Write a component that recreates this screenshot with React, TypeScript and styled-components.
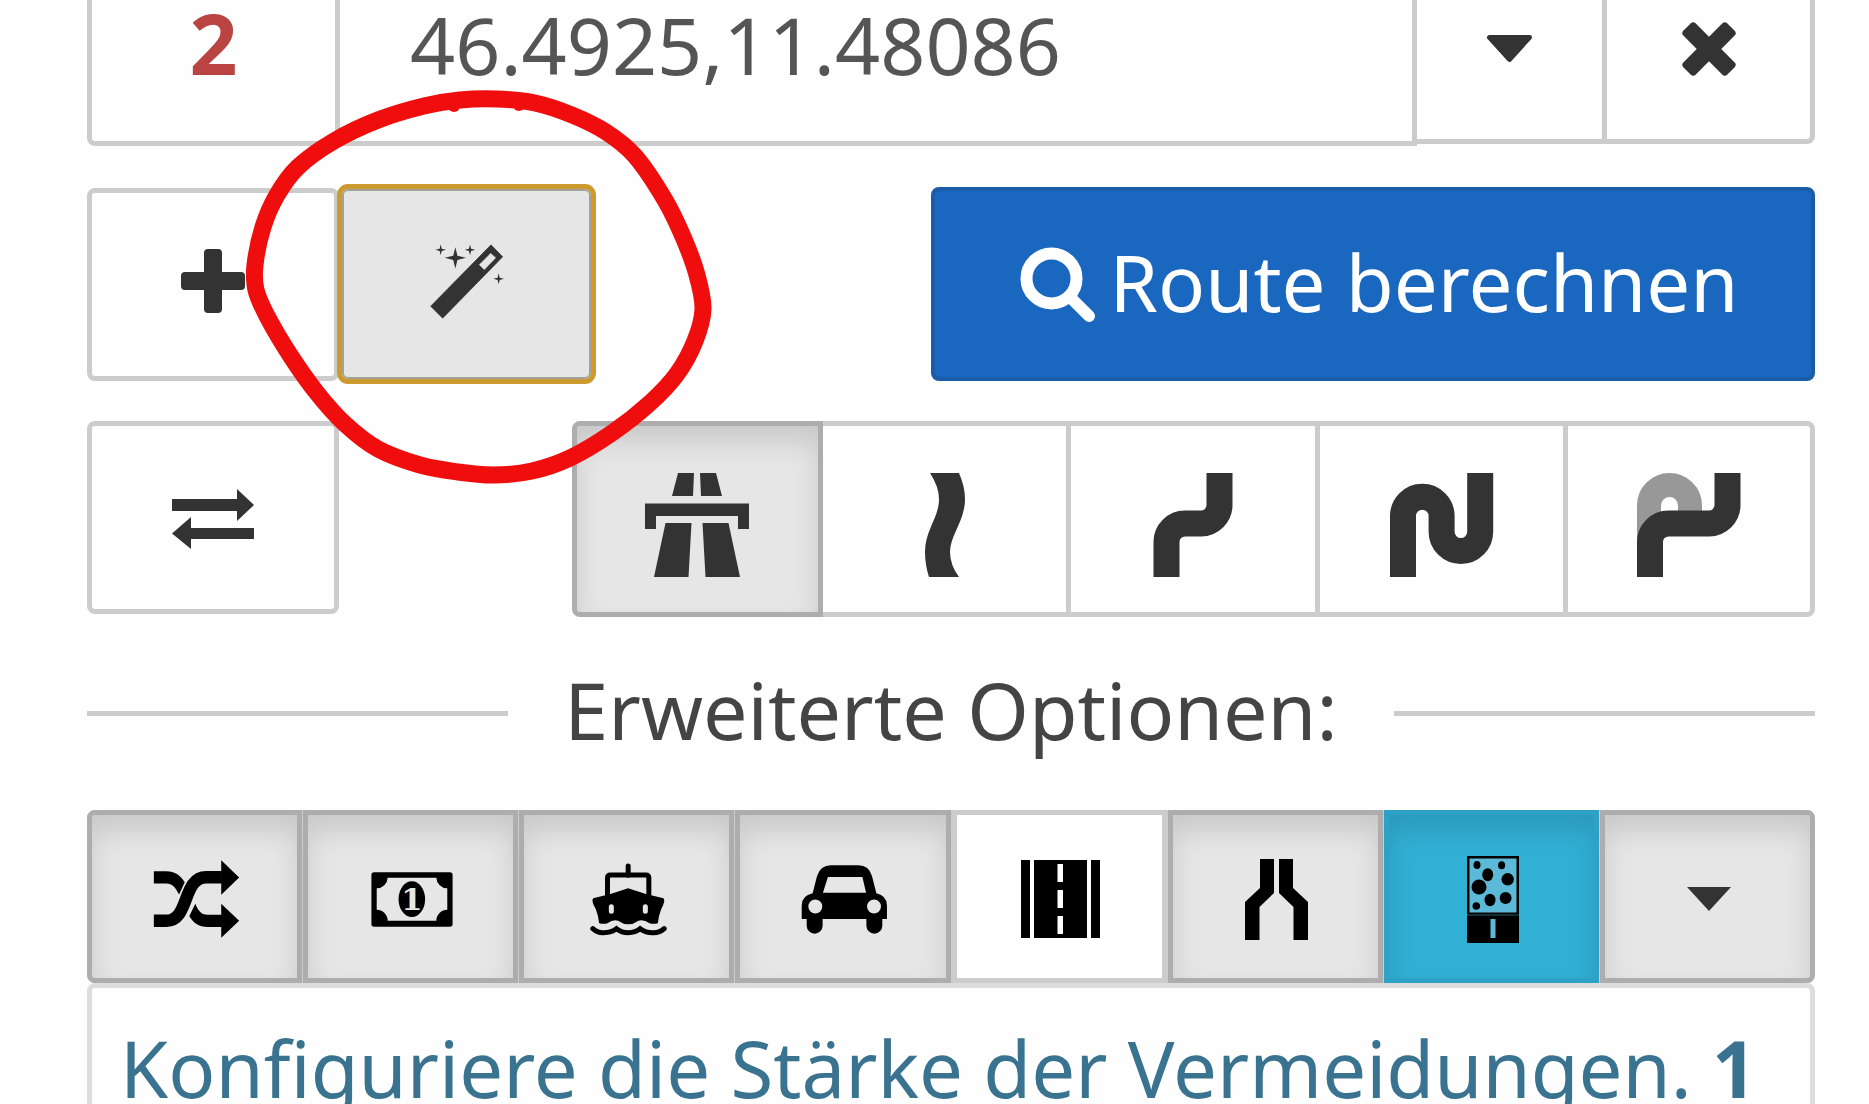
import React from "react";
import styled, { createGlobalStyle, css } from "styled-components";

const ink = "#333333";
const line = "#cccccc";
const pressedLine = "#adadad";

const GlobalStyle = createGlobalStyle`
  *, *::before, *::after { box-sizing: border-box; }
  body {
    margin: 0;
    background: #fefefe;
    font-family: "Noto Sans", "Open Sans", sans-serif;
    font-size: 78px;
  }
  button, input { font: inherit; margin: 0; }
`;

const Page = styled.main`
  display: flex;
  flex-direction: column;
  height: 100vh;
  overflow: hidden;
  padding: 0 54px 0 87px;
`;

/* ---- waypoint row ---- */

const Waypoint = styled.div`
  display: grid;
  grid-template-columns: 248px minmax(0, 1fr) 190px 208px;
  align-items: start;
  flex: none;
`;

const WaypointNumber = styled.label`
  height: 146px;
  padding-bottom: 56px;
  display: flex;
  align-items: center;
  justify-content: center;
  border: solid ${line};
  border-width: 0 0 5px 5px;
  border-bottom-left-radius: 8px;
  color: #b94442;
  font-size: 84px;
  line-height: 84px;
  font-weight: 700;
`;

const WaypointInput = styled.input`
  width: 100%;
  height: 146px;
  padding: 0 20px 52px 70px;
  border: solid ${line};
  border-width: 0 5px 5px 5px;
  border-radius: 0;
  background: transparent;
  color: #555555;
  outline: none;
  && { font-size: 79px; }
`;

const WaypointButton = styled.button<{ $last?: boolean }>`
  height: 144px;
  padding: 0 0 42px;
  display: flex;
  align-items: center;
  justify-content: center;
  background: transparent;
  border: solid ${line};
  border-width: 0 5px 5px 0;
  border-radius: 0 0 ${(p) => (p.$last ? "8px" : "0")} 0;
`;

/* ---- action rows ---- */

const Row = styled.div`
  display: flex;
  align-items: center;
  justify-content: space-between;
  flex: none;
  height: 194px;
  margin-top: 41px;
`;

const ModeRow = styled(Row)`
  align-items: flex-start;
  height: 196px;
  margin-top: 40px;
`;

const Cluster = styled.div`
  display: flex;
  align-items: center;
`;

const SquareButton = styled.button`
  width: 252px;
  height: 193px;
  padding: 0 0 6px;
  display: flex;
  align-items: center;
  justify-content: center;
  background: transparent;
  border: 5px solid ${line};
  border-radius: 8px;
`;

const SwapButton = styled(SquareButton)`
  padding: 2px 0 0;
`;

const WandHolder = styled.div`
  position: relative;
  margin-left: 3px;
`;

const WandButton = styled(SquareButton)`
  width: 249px;
  height: 190px;
  background: #e6e6e6;
  border: 2px solid #a4a09a;
  border-radius: 6px;
  outline: 5px solid #cc9a2e;
`;

const Marker = styled.svg`
  position: absolute;
  left: -96px;
  top: -99px;
  z-index: 5;
  pointer-events: none;
`;

const CalculateButton = styled.button`
  width: 884px;
  height: 194px;
  padding: 0 0 4px 12px;
  display: flex;
  align-items: center;
  justify-content: center;
  gap: 14px;
  color: #ffffff;
  background: #1a67c0;
  border: 4px solid #1a5caa;
  border-radius: 8px;
  white-space: nowrap;
`;

const ModeGroup = styled.div`
  display: grid;
  grid-template-columns: repeat(5, minmax(0, 1fr));
  width: 1243px;
`;

const pressedFace = css`
  background: #e6e6e6;
  border-color: ${pressedLine};
  box-shadow: inset 0 16px 27px rgba(0, 0, 0, 0.125);
`;

const ModeButton = styled.button<{ $active?: boolean }>`
  position: relative;
  height: 196px;
  margin: 0 -2px 0 -3px;
  padding: 12px 0 0;
  display: flex;
  align-items: center;
  justify-content: center;
  background: transparent;
  border: 5px solid ${line};
  &:first-child { margin-left: 0; border-radius: 8px 0 0 8px; }
  &:last-child { margin-right: 0; border-radius: 0 8px 8px 0; }
  ${(p) => p.$active && css`${pressedFace} z-index: 1;`}
`;

/* ---- advanced options ---- */

const Divider = styled.div`
  display: grid;
  grid-template-columns: 1fr auto 1fr;
  align-items: center;
  gap: 56px;
  flex: none;
  height: 193px;
`;

const Rule = styled.hr`
  width: 100%;
  height: 5px;
  margin: 0;
  border: 0;
  background: ${line};
`;

const DividerText = styled.h2`
  margin: 0;
  padding-bottom: 8px;
  color: #444444;
  font-size: 79px;
  line-height: 100px;
  font-weight: 400;
  white-space: nowrap;
`;

const OptionGroup = styled.div`
  display: grid;
  grid-template-columns: repeat(8, minmax(0, 1fr));
  gap: 1px;
  flex: none;
  height: 173px;
  background: ${line};
  border-radius: 8px;
`;

type Tone = "pressed" | "plain" | "blue";

const OptionButton = styled.button<{ $tone: Tone }>`
  padding: 5px 0 0 3px;
  display: flex;
  align-items: center;
  justify-content: center;
  border: 5px solid ${line};
  background: #ffffff;
  &:first-child { border-radius: 8px 0 0 8px; }
  &:last-child { border-radius: 0 8px 8px 0; }
  ${(p) => p.$tone === "pressed" && pressedFace}
  ${(p) =>
    p.$tone === "blue" &&
    css`
      background: #31b0d5;
      border-color: #2da2c6;
      box-shadow: inset 0 16px 27px rgba(0, 0, 0, 0.125);
    `}
`;

const Panel = styled.section`
  flex: 1 0 auto;
  padding: 28px 20px 0 28px;
  border: 5px solid #dddddd;
  border-bottom: 0;
  border-radius: 8px 8px 0 0;
  color: #3a738f;
`;

const PanelText = styled.p`
  margin: 0;
  line-height: 104px;
  white-space: nowrap;
`;

/* ---- drawings ---- */

const Svg = ({ box, w, h, children }: { box: string; w: number; h: number; children: React.ReactNode }) => (
  <svg viewBox={box} width={w} height={h} fill={ink} aria-hidden="true">
    {children}
  </svg>
);

const Caret = () => (
  <Svg box="80 102 140 86" w={47} h={29}>
    <path d="M90 112H210L150 178z" stroke={ink} strokeWidth="14" strokeLinejoin="round" />
  </Svg>
);

const SmallCaret = () => (
  <Svg box="0 0 44 24" w={44} h={24}>
    <path d="M0 0H44L22 24z" />
  </Svg>
);

const Cross = () => (
  <Svg box="667 69 162 162" w={54} h={54}>
    <g transform="rotate(45 748 150)">
      <rect x="655" y="124" width="186" height="52" rx="11" />
      <rect x="722" y="57" width="52" height="186" rx="11" />
    </g>
  </Svg>
);

const Plus = () => (
  <Svg box="0 0 64 64" w={64} h={64}>
    <rect x="23" y="0" width="18" height="64" rx="4" />
    <rect x="0" y="23" width="64" height="18" rx="4" />
  </Svg>
);

const star = (x: number, y: number, r: number) => {
  const i = r * 0.2;
  return `M${x} ${y - r}L${x + i} ${y - i}L${x + r} ${y}L${x + i} ${y + i}L${x} ${y + r}L${x - i} ${y + i}L${x - r} ${y}L${x - i} ${y - i}z`;
};

const Wand = () => (
  <Svg box="-9 0 300 362" w={100} h={121}>
    <path
      fillRule="evenodd"
      d="M32 255L68 291L248 107L213 71zM176 131L212 95L229 110L193 147z"
      stroke={ink}
      strokeWidth="2"
      strokeLinejoin="round"
    />
    <path d={[star(106, 110, 32), star(62, 86, 16), star(150, 86, 16), star(236, 173, 16)].join("")} />
  </Svg>
);

const Magnifier = () => (
  <Svg box="30 6 234 258" w={76} h={84}>
    <circle cx="127" cy="124" r="77" fill="none" stroke="#ffffff" strokeWidth="37" />
    <path d="M185 182L243 240" stroke="#ffffff" strokeWidth="36" strokeLinecap="round" />
  </Svg>
);

const Swap = () => (
  <Svg box="0 0 82 60" w={82} h={60}>
    <path d="M0 10H65V0L82 16L65 32V22H0zM82 39V50H19V60L0 44.500L19 28V39z" />
  </Svg>
);

const Motorway = () => (
  <Svg box="0 0 104 104" w={104} h={104}>
    <path d="M33 0H49L48 23H27zM55 0H71L77 23H56zM0 30.500H104V56H93V43H11V56H0zM20.500 50H46.500L43.500 104H9zM57.500 50H83.500L95 104H60.500z" />
  </Svg>
);

const GentleCurve = () => (
  <Svg box="0 0 104 104" w={104} h={104}>
    <path d="M38 0H67Q73 14 73 26C73 48 58 62 58 79Q58 92 67 104H37Q33 92 33 79C33 57 47 45 47 26Q47 14 38 0z" />
  </Svg>
);

const Bend = () => (
  <Svg box="0 0 104 104" w={104} h={104}>
    <path
      d="M78.500 0V32A18.500 18.500 0 0 1 60 50.500H44A18.500 18.500 0 0 0 25.500 69V104"
      fill="none"
      stroke={ink}
      strokeWidth="26"
    />
  </Svg>
);

const Serpentine = () => (
  <Svg box="0 0 104 104" w={104} h={104}>
    <path
      d="M13 104V43A19.300 19.300 0 0 1 51.600 43V58.700A19.300 19.300 0 0 0 90.200 58.700V0"
      fill="none"
      stroke={ink}
      strokeWidth="26"
    />
  </Svg>
);

const Detour = () => (
  <Svg box="0 0 104 104" w={104} h={104}>
    <path d="M12 75V32.500A20.500 20.500 0 0 1 53 32.500V45" fill="none" stroke="#989898" strokeWidth="24" />
    <path
      d="M90.500 0V32A18.500 18.500 0 0 1 72 50.500H31.500A18.500 18.500 0 0 0 13 69V104"
      fill="none"
      stroke={ink}
      strokeWidth="26"
    />
  </Svg>
);

const Shuffle = () => (
  <Svg box="98 81 261 235" w={87} h={78}>
    <g fill="#000000">
      <path d="M303 82L357 134L303 186zM303 213L357 264L303 315z" />
      <path d="M100 115H138C163 115 180 127 193 148L176 185C165 163 155 152 138 152H100z" />
      <path d="M225 213L207 250C218 270 235 283 262 283H305V246H262C245 246 235 238 225 213z" />
      <path d="M100 264H138C208 264 185 133 258 133H305" fill="none" stroke="#000000" strokeWidth="37" />
    </g>
  </Svg>
);

const Banknote = () => (
  <Svg box="753 126 247 166" w={82} h={55}>
    <path
      fill="#000000"
      fillRule="evenodd"
      d="M762 127H991Q999 127 999 135V283Q999 291 991 291H762Q754 291 754 283V135Q754 127 762 127zM803 143A33 33 0 0 1 770 175V240A33 33 0 0 1 803 273H950A33 33 0 0 1 983 240V175A33 33 0 0 1 950 143z"
    />
    <ellipse cx="876" cy="208" rx="40" ry="54" fill="#000000" />
    <text x="876" y="242" textAnchor="middle" fontFamily="DejaVu Serif, serif" fontWeight="700" fontSize="92" fill="#e6e6e6">
      1
    </text>
  </Svg>
);

const Ferry = () => (
  <Svg box="90 89 230 219" w={77} h={73}>
    <g fill="none" stroke="#000000" strokeWidth="15" strokeLinecap="round">
      <path d="M204 98V126" />
      <path d="M142 190V134Q142 125 151 125H257Q266 125 266 134V190" />
      <path d="M98 286Q112 299 130 298Q155 298 169 286Q185 298 204 298Q226 298 240 286Q256 298 278 298Q298 299 312 286" />
    </g>
    <path
      fill="#000000"
      fillRule="evenodd"
      d="M99 195Q152 184 204 165Q256 184 310 195Q317 203 303 228Q296 245 293 270Q279 273 268 270Q250 257 235 262Q204 284 174 262Q158 257 142 270Q130 273 117 270Q114 245 107 228Q92 203 99 195zM146 220V234A7.500 7.500 0 0 0 161 234V220A7.500 7.500 0 0 0 146 220zM248 220V234A7.500 7.500 0 0 0 263 234V220A7.500 7.500 0 0 0 248 220z"
    />
  </Svg>
);

const Car = () => (
  <Svg box="723 108 260 208" w={87} h={69}>
    <path
      fill="#000000"
      fillRule="evenodd"
      d="M757 193L770 142Q780 109 812 109H895Q927 109 936 142L949 193Q981 200 981 230V271H967V291A24 24 0 0 1 919 291V271H787V291A24 24 0 0 1 739 291V271H724V230Q724 200 757 193zM803 144H907L918 192H788zM744 233A21 21 0 0 0 786 233A21 21 0 0 0 744 233zM921 233A21 21 0 0 0 963 233A21 21 0 0 0 921 233z"
    />
  </Svg>
);

const Highway = () => (
  <Svg box="0 0 79 78" w={79} h={78}>
    <path fill="#000000" fillRule="evenodd" d="M0 0H9V78H0zM13 0H66V78H13zM70 0H79V78H70zM36.500 4V22H42V4zM36.500 30V48H42V30zM36.500 56V74H42V56z" />
  </Svg>
);

const Narrowing = () => (
  <Svg box="0 0 63 81" w={63} h={81}>
    <path fill="#000000" d="M15 0H29V34L14.500 48V81H0V43L15 29zM34 0H48V29L63 43V81H48.500V48L34 34z" />
  </Svg>
);

const Unpaved = () => (
  <Svg box="0 0 52 87" w={52} h={87}>
    <rect width="52" height="87" fill="#000000" />
    <rect x="2.500" y="2.500" width="47" height="54" fill="#5cbad8" />
    <path d="M0 59H52" stroke="#1d5f74" strokeWidth="1" />
    <rect x="23.500" y="63" width="5" height="19" fill="#5cbad8" />
    <g fill="#000000">
      <ellipse cx="10" cy="9" rx="3.500" ry="4" />
      <ellipse cx="34.600" cy="9.300" rx="3.500" ry="4" />
      <ellipse cx="20.700" cy="18.700" rx="5.500" ry="6.500" />
      <circle cx="40.700" cy="23.300" r="6.200" />
      <circle cx="12" cy="31" r="7.500" />
      <ellipse cx="23" cy="44" rx="5.500" ry="6.200" />
      <circle cx="38.600" cy="42" r="6" />
      <circle cx="9.300" cy="50" r="3.800" />
    </g>
  </Svg>
);

const strokePoints: [number, number][] = [
  [497, 99], [535, 103], [572, 115], [606, 132], [635, 156], [665, 200], [684, 239], [697, 275],
  [703, 309], [695, 341], [677, 374], [650, 403], [612, 433], [570, 458], [532, 471], [494, 475],
  [458, 472], [420, 465], [378, 449], [345, 424], [317, 393], [290, 355], [267, 316], [256, 290],
  [255, 265], [263, 227], [277, 195], [298, 167], [334, 141], [378, 120], [424, 106], [460, 100],
];

const smoothLoop = (pts: [number, number][]) => {
  const n = pts.length;
  let d = `M${pts[0][0]} ${pts[0][1]}`;
  for (let i = 0; i < n; i++) {
    const a = pts[(i - 1 + n) % n];
    const b = pts[i];
    const c = pts[(i + 1) % n];
    const e = pts[(i + 2) % n];
    d += `C${b[0] + (c[0] - a[0]) / 6} ${b[1] + (c[1] - a[1]) / 6} ${c[0] - (e[0] - b[0]) / 6} ${c[1] - (e[1] - b[1]) / 6} ${c[0]} ${c[1]}`;
  }
  return d + "z";
};

const HandDrawnRing = () => (
  <Marker viewBox="246 90 466 394" width={466} height={394} aria-hidden="true">
    <path d={smoothLoop(strokePoints)} fill="none" stroke="#f00d0d" strokeWidth="17" strokeLinejoin="round" />
    <circle cx="454" cy="106" r="6" fill="#f00d0d" />
    <circle cx="519" cy="105" r="6" fill="#f00d0d" />
  </Marker>
);

const modes = [
  { label: "Schnell", icon: <Motorway />, active: true },
  { label: "Leicht kurvig", icon: <GentleCurve /> },
  { label: "Kurvig", icon: <Bend /> },
  { label: "Sehr kurvig", icon: <Serpentine /> },
  { label: "Umweg", icon: <Detour /> },
];

const options: { label: string; icon: React.ReactNode; tone: Tone }[] = [
  { label: "Abwechslung", icon: <Shuffle />, tone: "pressed" },
  { label: "Maut", icon: <Banknote />, tone: "pressed" },
  { label: "Fähren", icon: <Ferry />, tone: "pressed" },
  { label: "Autozüge", icon: <Car />, tone: "pressed" },
  { label: "Autobahnen", icon: <Highway />, tone: "plain" },
  { label: "Engstellen", icon: <Narrowing />, tone: "pressed" },
  { label: "Unbefestigte Straßen", icon: <Unpaved />, tone: "blue" },
  { label: "Mehr", icon: <SmallCaret />, tone: "pressed" },
];

export default function App() {
  return (
    <>
      <GlobalStyle />
      <Page>
        <Waypoint>
          <WaypointNumber htmlFor="waypoint-2">2</WaypointNumber>
          <WaypointInput id="waypoint-2" type="text" defaultValue="46.4925,11.48086" />
          <WaypointButton type="button" aria-label="Auswahl"><Caret /></WaypointButton>
          <WaypointButton type="button" aria-label="Entfernen" $last><Cross /></WaypointButton>
        </Waypoint>

        <Row>
          <Cluster>
            <SquareButton type="button" aria-label="Hinzufügen"><Plus /></SquareButton>
            <WandHolder>
              <WandButton type="button" aria-label="Assistent"><Wand /></WandButton>
              <HandDrawnRing />
            </WandHolder>
          </Cluster>
          <CalculateButton type="button">
            <Magnifier />
            Route berechnen
          </CalculateButton>
        </Row>

        <ModeRow>
          <SwapButton type="button" aria-label="Umkehren"><Swap /></SwapButton>
          <ModeGroup>
            {modes.map((m) => (
              <ModeButton key={m.label} type="button" aria-label={m.label} $active={m.active}>
                {m.icon}
              </ModeButton>
            ))}
          </ModeGroup>
        </ModeRow>

        <Divider>
          <Rule />
          <DividerText>Erweiterte Optionen:</DividerText>
          <Rule />
        </Divider>

        <OptionGroup>
          {options.map((o) => (
            <OptionButton key={o.label} type="button" aria-label={o.label} $tone={o.tone}>
              {o.icon}
            </OptionButton>
          ))}
        </OptionGroup>

        <Panel>
          <PanelText>
            Konfiguriere die Stärke der Vermeidungen. <b>1</b>
          </PanelText>
        </Panel>
      </Page>
    </>
  );
}
